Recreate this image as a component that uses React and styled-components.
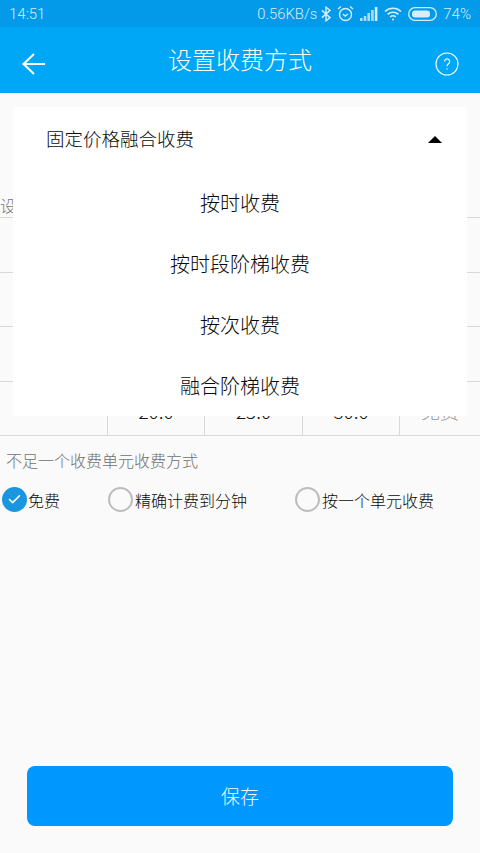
import React from 'react';
import styled, { createGlobalStyle } from 'styled-components';
import { Check } from 'lucide-react';

const GlobalStyle = createGlobalStyle`
  html, body {
    margin: 0;
    padding: 0;
    background: #fafafa;
    font-family: "Noto Sans CJK SC", "Noto Sans", sans-serif;
  }
`;

const Page = styled.div`
  display: flex;
  flex-direction: column;
  width: 480px;
  height: 853px;
  overflow: hidden;
  background: #fafafa;
`;

const StatusBar = styled.div`
  display: flex;
  align-items: center;
  justify-content: space-between;
  height: 27px;
  padding: 0 9px;
  box-sizing: border-box;
  background: #039ae9;
  color: #d5eefc;
  font-family: Roboto, "Liberation Sans", sans-serif;
  font-size: 15px;
  font-weight: 300;
`;

const StatusRight = styled.div`
  display: flex;
  align-items: center;
  gap: 6px;
`;

const Speed = styled.span`
  margin-right: -2px;
  font-size: 14.8px;
`;

const Header = styled.div`
  display: flex;
  justify-content: space-between;
  height: 66px;
  padding: 25px 21px 0 22px;
  box-sizing: border-box;
  background: #00a7f7;
  color: #fff;
`;

const Title = styled.h1`
  margin: -25px 0 0 0;
  font-size: 24px;
  font-weight: 300;
  line-height: 64px;
`;

const Body = styled.div`
  position: relative;
  display: flex;
  flex-direction: column;
  flex: 1;
`;

const RuleLabel = styled.div`
  height: 125px;
  box-sizing: border-box;
  padding-top: 101px;
  font-size: 16px;
  line-height: 22px;
  color: #777;
  border-bottom: 1px solid #d8d8d8;
  font-weight: 300;
`;

const Row = styled.div`
  display: grid;
  grid-template-columns: ${p => p.$cols ? '108px 97px 98px 97px 80px' : '1fr'};
  height: 54.5px;
  box-sizing: border-box;
  border-bottom: 1px solid #d8d8d8;
`;

const Cell = styled.div`
  display: flex;
  align-items: center;
  justify-content: center;
  padding-top: 5px;
  box-sizing: border-box;
  font-size: 19px;
  font-weight: 300;
  color: ${p => p.$muted ? '#999' : '#111'};
  border-right: 1px solid #d8d8d8;
  &:last-child { border-right: 0; }
`;

const SectionLabel = styled.div`
  margin: 13px 0 0 6px;
  font-size: 16px;
  line-height: 22px;
  color: #6f6f6f;
  font-weight: 300;
`;

const Options = styled.div`
  display: flex;
  margin-top: 16px;
  padding-left: 2px;
`;

const Option = styled.div`
  display: flex;
  align-items: center;
  gap: ${p => p.$checked ? 1 : 2}px;
  width: ${p => p.$width}px;
  font-size: 16px;
  color: #0a0a0a;
  font-weight: 300;
`;

const Radio = styled.span`
  display: flex;
  align-items: center;
  justify-content: center;
  width: 25px;
  height: 25px;
  box-sizing: border-box;
  border-radius: 50%;
  background: ${p => p.$checked ? '#1a96e0' : 'transparent'};
  border: ${p => p.$checked ? '0' : '2px solid #bdbdbd'};
  color: #fff;
`;

const SaveBar = styled.div`
  margin-top: auto;
  padding: 0 27px 27px;
`;

const SaveButton = styled.button`
  display: block;
  width: 100%;
  height: 60px;
  padding: 0 0 2px;
  border: 0;
  border-radius: 8px;
  background: #0098ff;
  color: #f2f9ff;
  font-family: inherit;
  font-size: 19px;
  font-weight: 300;
`;

const Dropdown = styled.div`
  position: absolute;
  left: 13px;
  top: 14px;
  width: 454px;
  height: 309px;
  background: #fff;
  font-weight: 300;
  color: #0a0a0a;
`;

const DropHead = styled.div`
  display: flex;
  align-items: center;
  justify-content: space-between;
  height: 65px;
  box-sizing: border-box;
  padding: 0 25px 3px 33px;
  font-size: 18.5px;
`;

const Caret = styled.span`
  width: 0;
  height: 0;
  margin-top: 3px;
  border-left: 7px solid transparent;
  border-right: 7px solid transparent;
  border-bottom: 7px solid #000;
`;

const DropItem = styled.div`
  height: 61px;
  display: flex;
  align-items: center;
  justify-content: center;
  font-size: 20px;
`;

function Bluetooth() {
  return (
    <svg width="10" height="16" viewBox="0 0 11 17" fill="none" stroke="#d5eefc" strokeWidth="1.6">
      <path d="M1 4.5l9 8-4.5 3.5V1L10 4.5l-9 8" />
    </svg>
  );
}

function Alarm() {
  return (
    <svg width="17" height="17" viewBox="0 0 17 17" fill="none" stroke="#d5eefc" strokeWidth="1.4">
      <circle cx="8.5" cy="9.5" r="6" />
      <path d="M5.8 9l2.4 2 2.6-2M1 4l3-2.5M16 4l-3-2.5" />
    </svg>
  );
}

function Signal() {
  const bars = [3, 5, 8, 11, 14];
  return (
    <svg width="18" height="14" viewBox="0 0 18 14" fill="#d5eefc">
      {bars.map((h, i) => <rect key={h} x={i * 3.7} y={14 - h} width="2.6" height={h} opacity={i === 4 ? 1 : 0.8} />)}
    </svg>
  );
}

function Wifi() {
  return (
    <svg width="18" height="14" viewBox="0 0 18 14" fill="none" stroke="#d5eefc" strokeWidth="1.7">
      <path d="M1 4.5a11.5 11.5 0 0 1 16 0M3.6 7.4a7.8 7.8 0 0 1 10.8 0M6.2 10a4 4 0 0 1 5.6 0" />
      <circle cx="9" cy="12.6" r="1" fill="#d5eefc" stroke="none" />
    </svg>
  );
}

function Battery() {
  return (
    <svg width="29" height="14" viewBox="0 0 29 14" fill="none">
      <rect x="0.7" y="0.7" width="27.6" height="12.6" rx="6.3" stroke="#d5eefc" strokeWidth="1.3" />
      <rect x="4" y="3.5" width="18" height="7" rx="3" fill="#d5eefc" />
    </svg>
  );
}

function BackArrow() {
  return (
    <svg width="23" height="24" viewBox="0 0 23 24" fill="none" stroke="#fff" strokeWidth="2">
      <path d="M23 12H2M12 2L1.5 12 12 22" />
    </svg>
  );
}

function HelpIcon() {
  return (
    <svg width="24" height="24" viewBox="0 0 24 24" fill="none" stroke="#fff" strokeWidth="1.1">
      <circle cx="12" cy="12" r="11" />
      <path d="M9.5 9.5a2.6 2.6 0 1 1 4 2.2c-1 .7-1.5 1.1-1.5 2.5" />
      <circle cx="12" cy="17" r=".7" fill="#fff" stroke="none" />
    </svg>
  );
}

const options = [
  { label: '免费', width: 106, checked: true },
  { label: '精确计费到分钟', width: 187 },
  { label: '按一个单元收费', width: 160 },
];

const modes = ['按时收费', '按时段阶梯收费', '按次收费', '融合阶梯收费'];

export default function App() {
  return (
    <>
      <GlobalStyle />
      <Page>
        <StatusBar>
          <span>14:51</span>
          <StatusRight>
            <Speed>0.56KB/s</Speed>
            <Bluetooth />
            <Alarm />
            <Signal />
            <Wifi />
            <Battery />
            <span>74%</span>
          </StatusRight>
        </StatusBar>
        <Header>
          <BackArrow />
          <Title>设置收费方式</Title>
          <HelpIcon />
        </Header>
        <Body>
          <RuleLabel>设置收费规则</RuleLabel>
          <Row />
          <Row />
          <Row />
          <Row $cols>
            <Cell />
            <Cell>20.0</Cell>
            <Cell>25.0</Cell>
            <Cell>30.0</Cell>
            <Cell $muted>免费</Cell>
          </Row>
          <SectionLabel>不足一个收费单元收费方式</SectionLabel>
          <Options>
            {options.map(o => (
              <Option key={o.label} $width={o.width} $checked={o.checked}>
                <Radio $checked={o.checked}>
                  {o.checked && <Check size={15} strokeWidth={2.5} />}
                </Radio>
                {o.label}
              </Option>
            ))}
          </Options>
          <SaveBar>
            <SaveButton>保存</SaveButton>
          </SaveBar>
          <Dropdown>
            <DropHead>
              固定价格融合收费
              <Caret />
            </DropHead>
            {modes.map(m => <DropItem key={m}>{m}</DropItem>)}
          </Dropdown>
        </Body>
      </Page>
    </>
  );
}
